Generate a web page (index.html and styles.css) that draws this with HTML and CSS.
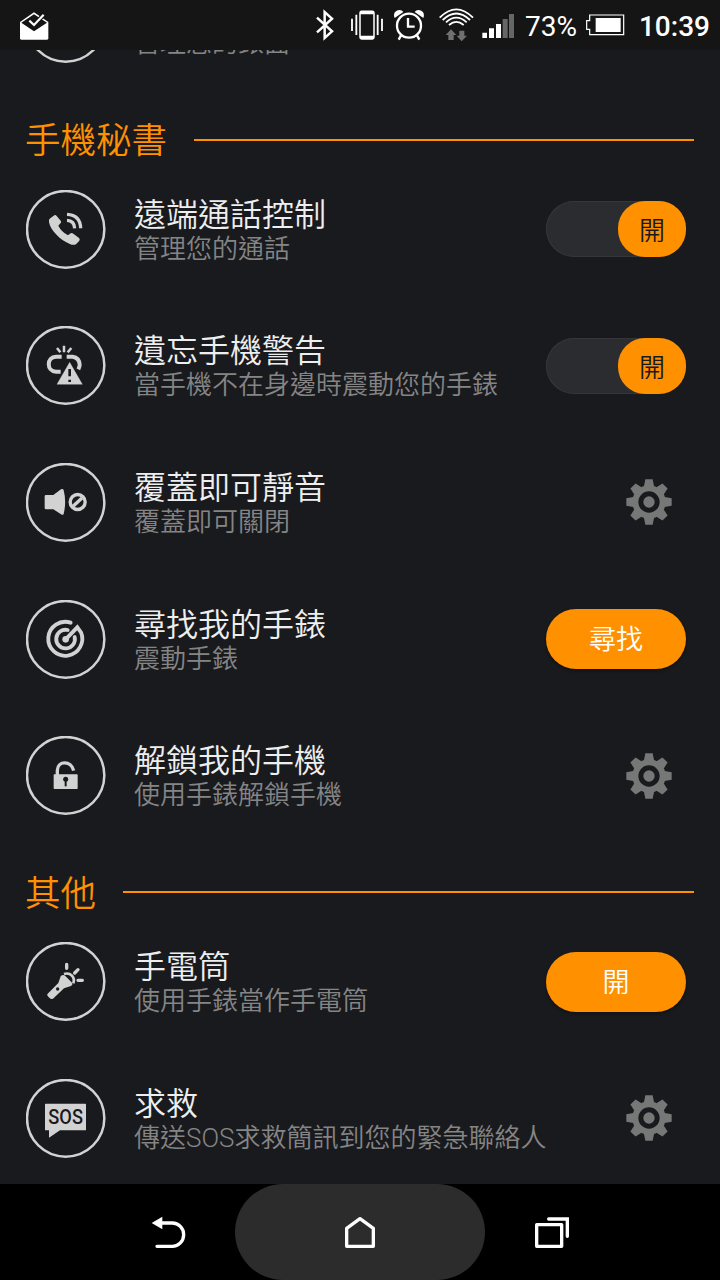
FILE: index.html
```html
<!DOCTYPE html>
<html lang="zh-Hant">
<head>
<meta charset="utf-8">
<title>手機秘書</title>
<link rel="stylesheet" href="styles.css">
</head>
<body>
<svg class="defs" width="0" height="0">
  <defs>
    <symbol id="gear" viewBox="0 0 138 138">
      <g fill="#777">
        <circle cx="69" cy="69" r="50"/>
        <g id="teeth">
          <path id="tooth" d="M53 26 58 1H80L85 26Z"/>
          <use href="#tooth" transform="rotate(45 69 69)"/>
          <use href="#tooth" transform="rotate(90 69 69)"/>
          <use href="#tooth" transform="rotate(135 69 69)"/>
          <use href="#tooth" transform="rotate(180 69 69)"/>
          <use href="#tooth" transform="rotate(225 69 69)"/>
          <use href="#tooth" transform="rotate(270 69 69)"/>
          <use href="#tooth" transform="rotate(315 69 69)"/>
        </g>
      </g>
      <circle cx="69" cy="69" r="24.5" fill="#777" stroke="#191a1e" stroke-width="15"/>
    </symbol>
  </defs>
</svg>
<div class="screen">
  <header class="status">
    <svg class="mail" viewBox="54 0 96 150">
      <path d="M60 66 102 37 145 66V115Q145 119 141 119H64Q60 119 60 115Z" fill="#fff"/>
      <path d="M64 68 102 43 141 68 102 94Z" fill="#151515"/>
      <path d="M88 62 102 75 131 44" fill="none" stroke="#151515" stroke-width="13"/>
      <path d="M88 62 102 75 131 44" fill="none" stroke="#fff" stroke-width="6.5"/>
    </svg>
    <div class="status-right">
      <svg class="bt" viewBox="42 0 66 150"><path d="M51 53 96 94 74 114V36L96 56 51 97" fill="none" stroke="#fff" stroke-width="7.5"/></svg>
      <svg class="vib" viewBox="144 0 114 150">
        <rect x="180" y="34" width="42" height="83" rx="5" fill="none" stroke="#fff" stroke-width="4.5"/>
        <path d="M180 38H222M180 112H222" stroke="#fff" stroke-width="10"/>
        <path d="M169 44V105M233 44V105" stroke="#fff" stroke-width="5.5"/>
        <path d="M156 56V93M246 56V93" stroke="#fff" stroke-width="5.5"/>
      </svg>
      <svg class="alarm" viewBox="276 0 102 150">
        <circle cx="327" cy="77" r="36" fill="none" stroke="#fff" stroke-width="7"/>
        <path d="M324 54V80H344" fill="none" stroke="#fff" stroke-width="7"/>
        <path d="M303 106 296 119M351 106 358 119" stroke="#fff" stroke-width="7"/>
        <path d="M284 54C278 41 287 30 298 30Q307 30 310 36ZM370 54C376 41 367 30 356 30Q347 30 344 36Z" fill="#fff"/>
      </svg>
      <svg class="wifi" viewBox="414 0 114 150">
        <g fill="none" stroke="#fff" stroke-width="5.5">
          <path d="M419 53Q469 3 519 53"/><path d="M428 60Q469 21 510 60"/><path d="M438 67Q469 39 500 67"/><path d="M447 75Q469 56 491 75"/>
        </g>
        <path d="M453 88 469 105H461V120H445V105H437ZM478 92H493V107H501L485 124 470 107H478Z" fill="#707070"/>
      </svg>
      <svg class="signal" viewBox="540 0 108 150">
        <path d="M547 98H561V114H547ZM567 85H582V114H567ZM588 72H603V114H588Z" fill="#fff"/>
        <path d="M608 57H623V114H608ZM627 42H642V114H627Z" fill="#666"/>
      </svg>
      <span class="pct">73%</span>
      <svg class="battery" viewBox="222 0 126 150">
        <path d="M239 45H341V104H239V88H230V62H239Z" fill="none" stroke="#fff" stroke-width="3.6"/>
        <rect x="257" y="54" width="75" height="42" fill="#fff"/>
      </svg>
      <span class="clock">10:39</span>
    </div>
  </header>

  <main class="content">
    <div class="list">
      <div class="row">
        <svg class="icon" viewBox="48 30 240 237"><ellipse class="ring" cx="167" cy="148" rx="116" ry="115"/></svg>
        <div class="text"><div class="title"></div><div class="sub">管理您的錶面</div></div>
      </div>

      <h2 class="section"><span>手機秘書</span></h2>
      <div class="rows">
        <div class="row">
          <svg class="icon" viewBox="48 30 240 237">
            <ellipse class="ring" cx="167" cy="148" rx="116" ry="115"/>
            <path class="fill" d="M119 116 133 106Q137 104 140 108L152 122Q155 126 152 129L145 137Q154 155 174 166L182 160Q186 158 190 161L207 174Q211 178 208 182L198 193Q190 197 178 191C151 180 121 151 117 126Q116 119 119 116Z"/>
            <path class="line" d="M171 103Q211 105 212 145M171 121Q193 122 194 145" stroke-width="10"/>
          </svg>
          <div class="text"><div class="title">遠端通話控制</div><div class="sub">管理您的通話</div></div>
          <div class="toggle"><span class="knob">開</span></div>
        </div>
        <div class="row">
          <svg class="icon" viewBox="48 32 240 237">
            <ellipse class="ring" cx="167" cy="150" rx="116" ry="115"/>
            <path class="line" stroke-width="12" d="M155 124H138C109 125 109 168 138 169H152M170 124H188Q208 127 209 148Q209 154 205 162"/>
            <path class="line" stroke-width="7.5" d="M162 91V111M141 98 151 111M184 98 173 111"/>
            <path d="M179 136 222 211H136Z" fill="#191a1e"/>
            <path class="fill" d="M179 141 217 207H141Z" stroke="#d2d2d2" stroke-linejoin="round"/>
            <path d="M179 161V183M179 193V200" stroke="#191a1e" stroke-width="8"/>
          </svg>
          <div class="text"><div class="title">遺忘手機警告</div><div class="sub">當手機不在身邊時震動您的手錶</div></div>
          <div class="toggle"><span class="knob">開</span></div>
        </div>
        <div class="row">
          <svg class="icon" viewBox="48 40 240 237">
            <ellipse class="ring" cx="167" cy="158" rx="116" ry="115"/>
            <path class="fill" d="M108 136H130L153 119Q160 116 161 122Q170 157 161 192Q160 198 153 194L130 179H108Q104 179 104 175V140Q104 136 108 136Z"/>
            <circle class="line" cx="203" cy="157" r="22.5" stroke-width="10"/>
            <path class="line" d="M190 169 216 145" stroke-width="10"/>
          </svg>
          <div class="text"><div class="title">覆蓋即可靜音</div><div class="sub">覆蓋即可關閉</div></div>
          <svg class="gear"><use href="#gear"/></svg>
        </div>
        <div class="row">
          <svg class="icon" viewBox="48 30 240 237">
            <ellipse class="ring" cx="167" cy="148" rx="116" ry="115"/>
            <path class="line" stroke-width="11.5" stroke-linecap="round" d="M182 98A51 51 0 1 0 213 127L202 112 169 146"/>
            <path class="line" stroke-width="11.5" stroke-linecap="round" d="M173 120A28 28 0 1 0 194 141"/>
            <circle class="fill" cx="167" cy="148" r="10"/>
          </svg>
          <div class="text"><div class="title">尋找我的手錶</div><div class="sub">震動手錶</div></div>
          <div class="button">尋找</div>
        </div>
        <div class="row">
          <svg class="icon" viewBox="48 32 240 237">
            <ellipse class="ring" cx="167" cy="150" rx="116" ry="115"/>
            <path class="line" stroke-width="10" d="M142 150V135C143 105 184 105 191 136"/>
            <rect class="fill" x="131" y="147" width="72" height="44" rx="2"/>
            <circle cx="167" cy="162" r="7.5" fill="#191a1e"/>
            <path d="M167 162V183" stroke="#191a1e" stroke-width="6"/>
          </svg>
          <div class="text"><div class="title">解鎖我的手機</div><div class="sub">使用手錶解鎖手機</div></div>
          <svg class="gear"><use href="#gear"/></svg>
        </div>
      </div>

      <h2 class="section"><span>其他</span></h2>
      <div class="rows">
        <div class="row">
          <svg class="icon" viewBox="48 36 240 237">
            <ellipse class="ring" cx="167" cy="154" rx="116" ry="115"/>
            <path class="fill" d="M113 191 145 159 152 139Q159 131 166 138L184 156Q191 163 183 168L162 175 129 206Q123 209 118 203L113 198Q110 194 113 191Z"/>
            <circle cx="143" cy="177" r="5" fill="#191a1e"/>
            <path class="line" stroke-width="8" d="M162 132C181 126 196 141 190 160"/>
            <path class="line" stroke-width="10" stroke-linecap="round" d="M170 103V115M194 129 204 119M204 151H217"/>
          </svg>
          <div class="text"><div class="title">手電筒</div><div class="sub">使用手錶當作手電筒</div></div>
          <div class="button">開</div>
        </div>
        <div class="row">
          <svg class="icon" viewBox="48 446 240 237">
            <ellipse class="ring" cx="167" cy="564" rx="116" ry="115"/>
            <path class="fill" d="M107 520H226Q228 520 228 522V598Q228 600 226 600H150L117 622V600H107Q105 600 105 598V522Q105 520 107 520Z"/>
            <text class="sos" x="167" y="582" text-anchor="middle" textLength="104" lengthAdjust="spacingAndGlyphs">SOS</text>
          </svg>
          <div class="text"><div class="title">求救</div><div class="sub">傳送SOS求救簡訊到您的緊急聯絡人</div></div>
          <svg class="gear"><use href="#gear"/></svg>
        </div>
      </div>
    </div>
  </main>

  <nav class="nav">
    <div class="back"><svg viewBox="60 130 114 108">
      <path d="M92 157H127A34 35 0 0 1 127 227H81" fill="none" stroke="#fff" stroke-width="10" stroke-linecap="round"/>
      <path d="M65 157 97 138V176Z" fill="#fff"/></svg></div>
    <div class="home"><svg viewBox="633 130 114 108">
      <path d="M650 173 690 144 730 173V227H650Z" fill="none" stroke="#fff" stroke-width="10" stroke-linejoin="round"/></svg></div>
    <div class="recent"><svg viewBox="1209 130 114 108">
      <path d="M1220 162H1295V227H1220Z" fill="none" stroke="#fff" stroke-width="10" stroke-linejoin="round"/>
      <path d="M1256 145H1312V197" fill="none" stroke="#fff" stroke-width="10" stroke-linecap="round"/></svg></div>
  </nav>
</div>
</body>
</html>
```

FILE: styles.css
```css
* { box-sizing: border-box; }
body {
  margin: 0;
  background: #191a1e;
  font-family: Roboto, "Noto Sans CJK TC", sans-serif;
  font-weight: 350;
}
.defs { display: block; width: 0; height: 0; }
.screen {
  width: 720px;
  height: 1280px;
  display: flex;
  flex-direction: column;
  overflow: hidden;
}
.status {
  height: 50px;
  flex: none;
  display: flex;
  justify-content: space-between;
  padding: 0 10px 0 18px;
  background: #151515;
  color: #fff;
}
.status svg { height: 50px; flex: none; }
.mail { width: 32px; }
.status-right { display: flex; align-items: center; width: 396px; }
.bt { width: 22px; }
.vib { width: 38px; margin-left: 12px; }
.alarm { width: 34px; margin-left: 6px; }
.wifi { width: 38px; margin-left: 12px; }
.signal { width: 36px; margin-left: 4px; }
.pct { width: 58px; margin-left: 9px; font-size: 28px; font-weight: 400; line-height: 50px; padding-top: 3px; }
.battery { width: 42px; margin-left: 1px; }
.clock { margin-left: 13px; font-size: 28px; font-weight: 500; line-height: 50px; padding-top: 3px; white-space: nowrap; }

.content { flex: 1; min-height: 0; overflow: hidden; }
.list { margin-top: -66.33px; padding: 0 26px; }
.rows { display: flex; flex-direction: column; gap: 57.67px; }
.row { display: flex; align-items: center; height: 79px; }
.icon { width: 80px; height: 79px; flex: none; }
.ring { fill: none; stroke: #d2d2d2; stroke-width: 7.5; }
.fill { fill: #d2d2d2; }
.line { fill: none; stroke: #d2d2d2; }
.sos { font: 500 58px Roboto, sans-serif; fill: #191a1e; }
.text { flex: 1; min-width: 0; margin-left: 28px; padding-top: 2px; white-space: nowrap; }
.title { height: 38px; font-size: 32px; line-height: 38px; color: #eee; }
.sub { font-size: 26px; line-height: 31px; color: #858585; }

.section {
  margin: 0;
  height: 127px;
  padding: 27px 0 0;
  display: flex;
  align-items: center;
  gap: 27px;
  font-size: 35.5px;
  font-weight: 350;
  line-height: 50px;
  color: #ff9000;
}
.section span { margin-left: -1px; padding-top: 3px; }
.section::after { content: ""; flex: 1; height: 2px; background: #ff9000; }

.toggle {
  display: flex;
  justify-content: flex-end;
  width: 140px;
  height: 56px;
  margin-right: 8px;
  border-radius: 28px;
  background: #2b2c2f;
  box-shadow: inset 0 0 0 1px #35363a;
}
.knob {
  width: 68px;
  height: 56px;
  border-radius: 27px;
  background: #ff9000;
  color: #191a1e;
  font-size: 26px;
  line-height: 60px;
  text-align: center;
}
.button {
  width: 140px;
  height: 60px;
  margin-right: 8px;
  border-radius: 30px;
  background: #ff9000;
  box-shadow: 0 2px 3px rgba(0, 0, 0, .35);
  color: #fff;
  font-size: 27px;
  line-height: 63px;
  text-align: center;
}
.gear { width: 46px; height: 46px; margin-right: 22px; }

.nav {
  flex: none;
  height: 96px;
  display: grid;
  grid-template-columns: 235px 250px 235px;
  background: #000;
}
.nav div { display: flex; align-items: center; }
.nav svg { width: 38px; height: 36px; }
.back { justify-content: flex-end; padding-right: 47px; }
.home { justify-content: center; background: #2c2c2c; border-radius: 48px; }
.recent { padding-left: 48px; }
```
